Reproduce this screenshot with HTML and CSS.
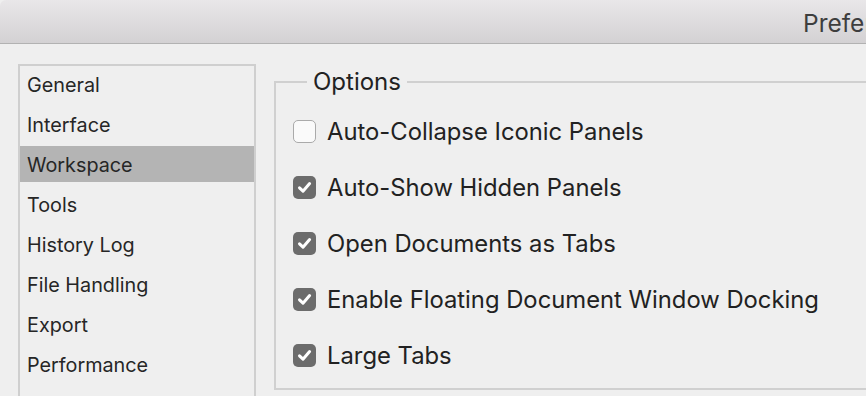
FILE: index.html
```html
<!DOCTYPE html>
<html>
<head>
<meta charset="utf-8">
<link rel="stylesheet" href="styles.css">
</head>
<body>
<div class="titlebar"><span class="title">Preferences</span></div>
<div class="main">
  <ul class="sidebar">
    <li class="item">General</li>
    <li class="item">Interface</li>
    <li class="item selected">Workspace</li>
    <li class="item">Tools</li>
    <li class="item">History Log</li>
    <li class="item">File Handling</li>
    <li class="item">Export</li>
    <li class="item">Performance</li>
  </ul>
  <fieldset class="options">
    <legend class="legend">Options</legend>
    <div class="row"><span class="box"></span><span class="label">Auto-Collapse Iconic Panels</span></div>
    <div class="row"><span class="box checked"><svg viewBox="0 0 23 23" width="23" height="23"><path d="M6.5 11.8 L10 15.2 L16.6 7.6" fill="none" stroke="#fff" stroke-width="3" stroke-linecap="round" stroke-linejoin="round"/></svg></span><span class="label">Auto-Show Hidden Panels</span></div>
    <div class="row"><span class="box checked"><svg viewBox="0 0 23 23" width="23" height="23"><path d="M6.5 11.8 L10 15.2 L16.6 7.6" fill="none" stroke="#fff" stroke-width="3" stroke-linecap="round" stroke-linejoin="round"/></svg></span><span class="label">Open Documents as Tabs</span></div>
    <div class="row"><span class="box checked"><svg viewBox="0 0 23 23" width="23" height="23"><path d="M6.5 11.8 L10 15.2 L16.6 7.6" fill="none" stroke="#fff" stroke-width="3" stroke-linecap="round" stroke-linejoin="round"/></svg></span><span class="label">Enable Floating Document Window Docking</span></div>
    <div class="row"><span class="box checked"><svg viewBox="0 0 23 23" width="23" height="23"><path d="M6.5 11.8 L10 15.2 L16.6 7.6" fill="none" stroke="#fff" stroke-width="3" stroke-linecap="round" stroke-linejoin="round"/></svg></span><span class="label">Large Tabs</span></div>
  </fieldset>
</div>
</body>
</html>
```
FILE: styles.css
```css
html, body {
  margin: 0;
  padding: 0;
  width: 866px;
  height: 396px;
  overflow: hidden;
  background: #efefef;
  font-family: Inter, "Open Sans", sans-serif;
  color: #222;
}
.titlebar {
  height: 43px;
  border-bottom: 1px solid #b2b2b2;
  background: linear-gradient(#e9e7e9, #d3d1d3);
  border-top-left-radius: 6px;
  white-space: nowrap;
  overflow: hidden;
  padding-left: 803px;
}
.title {
  display: block;
  font-size: 24.5px;
  line-height: 47px;
  color: #3e3e3e;
}
.main {
  display: flex;
  align-items: flex-start;
  gap: 18px;
  padding-left: 18px;
}
.sidebar {
  list-style: none;
  margin: 20px 0 0 0;
  padding: 0;
  width: 234px;
  flex-shrink: 0;
  border: 2px solid #cfcfcf;
  border-bottom: none;
  display: flex;
  flex-direction: column;
  gap: 4px;
  height: 340px;
  overflow: hidden;
}
.item {
  height: 36px;
  line-height: 38px;
  padding-left: 7px;
  font-size: 19.8px;
  flex-shrink: 0;
  white-space: nowrap;
  color: #262626;
}
.selected {
  background: #b4b4b4;
}
.options {
  flex: 1;
  margin: 24px 0 0 0;
  border: 2px solid #d0d0d0;
  border-right: none;
  padding: 7px 0 5px 17px;
  min-width: 0;
}
.legend {
  font-size: 24px;
  line-height: 28px;
  padding: 0 6px;
  margin-left: 14px;
}
.row {
  height: 56px;
  display: flex;
  align-items: center;
  gap: 11px;
  white-space: nowrap;
}
.box {
  width: 23px;
  height: 23px;
  box-sizing: border-box;
  border-radius: 5px;
  border: 1.5px solid #aaa;
  background: #fafafa;
  display: flex;
  flex-shrink: 0;
}
.box.checked {
  border: none;
  background: #6c6c6c;
}
.label {
  font-size: 23.8px;
}
```
